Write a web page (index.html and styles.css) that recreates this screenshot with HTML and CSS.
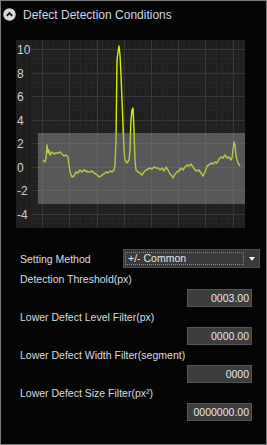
FILE: index.html
```html
<!DOCTYPE html>
<html lang="en">
<head>
    <meta charset="UTF-8">
    <meta name="viewport" content="width=device-width, initial-scale=1.0">
    <title>Defect Detection Conditions</title>
    <link rel="stylesheet" href="styles.css">
</head>
<body>
    <div class="panel">
        <div class="panel-header">
            <span class="toggle">
                <svg width="13" height="13" viewBox="0 0 13 13">
                    <circle cx="6.5" cy="6.5" r="6.2" fill="#d9d9d9"/>
                    <path d="M3.8 7.8 L6.5 5.1 L9.2 7.8" fill="none" stroke="#111" stroke-width="1.8"/>
                </svg>
            </span>
            <span class="title">Defect Detection Conditions</span>
        </div>

        <div class="chart">
            <svg width="229" height="188" viewBox="16 40 229 188">
                <rect x="16" y="40" width="229" height="188" fill="#1f1f1f"/>
                <g id="minorGrid" stroke="#262626" stroke-width="1"></g>
                <g stroke="#363636" stroke-width="1">
                    <line x1="42.5" y1="40" x2="42.5" y2="228"/>
                    <line x1="69.5" y1="40" x2="69.5" y2="228"/>
                    <line x1="97.5" y1="40" x2="97.5" y2="228"/>
                    <line x1="124.5" y1="40" x2="124.5" y2="228"/>
                    <line x1="151.5" y1="40" x2="151.5" y2="228"/>
                    <line x1="178.5" y1="40" x2="178.5" y2="228"/>
                    <line x1="205.5" y1="40" x2="205.5" y2="228"/>
                    <line x1="233.5" y1="40" x2="233.5" y2="228"/>
                    <line x1="32" y1="49.5" x2="245" y2="49.5"/>
                    <line x1="32" y1="73.5" x2="245" y2="73.5"/>
                    <line x1="32" y1="96.5" x2="245" y2="96.5"/>
                    <line x1="32" y1="120.5" x2="245" y2="120.5"/>
                    <line x1="32" y1="143.5" x2="245" y2="143.5"/>
                    <line x1="32" y1="167.5" x2="245" y2="167.5"/>
                    <line x1="32" y1="190.5" x2="245" y2="190.5"/>
                    <line x1="32" y1="214.5" x2="245" y2="214.5"/>
                </g>
                <g class="axis-label">
                    <text x="17" y="53.5">10</text>
                    <text x="17" y="77.5">8</text>
                    <text x="17" y="101">6</text>
                    <text x="17" y="124.5">4</text>
                    <text x="17" y="148">2</text>
                    <text x="17" y="171.5">0</text>
                    <text x="17" y="195">-2</text>
                    <text x="17" y="218.5">-4</text>
                </g>
                <polyline fill="none" stroke="#d6f000" stroke-width="1.4" stroke-linejoin="round"
                    points="43,160 45,162 46,158 47,145 48,153 49,150 50,155 52,152 54,154 56,153 58,153 60,152 62,154 64,156 66,155 68,157 69,165 70,172 72,177 74,176 76,172 78,173 80,170 82,172 84,170 86,171 88,172 90,172 92,171 94,173 96,174 98,176 100,177 102,175 104,174 106,172 108,173 110,171 112,172 114,170 115,165 116,140 117,60 118,52 119,46 120,55 121,75 122,100 123,125 124,150 125,160 127,163 129,160 130,150 131,120 132,110 133,108 134,130 135,160 136,170 138,172 140,173 142,175 144,172 146,170 148,169 150,168 152,169 154,167 156,168 158,168 160,170 162,168 164,171 166,167 168,170 170,174 172,176 173,178 175,174 177,172 179,171 181,168 183,170 185,167 187,165 189,166 191,164 193,167 195,170 197,171 199,170 201,173 203,176 205,172 207,166 209,165 211,163 213,164 215,162 217,163 219,159 221,157 223,158 225,155 227,158 229,157 231,160 232,158 234,142 235,145 236,155 237,160 238,163 240,166"/>
                <rect x="38" y="133" width="207" height="71" fill="rgba(150, 150, 150, 0.47)"/>
            </svg>
        </div>

        <div class="form">
            <div class="row">
                <label class="row-label">Setting Method</label>
                <div class="select">
                    <span class="select-value">+/- Common</span>
                    <span class="select-arrow"></span>
                </div>
            </div>

            <div class="field">
                <label>Detection Threshold(px)</label>
                <input type="text" value="0003.00">
            </div>

            <div class="field">
                <label>Lower Defect Level Filter(px)</label>
                <input type="text" value="0000.00">
            </div>

            <div class="field">
                <label>Lower Defect Width Filter(segment)</label>
                <input type="text" value="0000">
            </div>

            <div class="field">
                <label>Lower Defect Size Filter(px²)</label>
                <input type="text" value="0000000.00">
            </div>
        </div>
    </div>

    <script>
        // fine background grid of the chart
        let minor = document.getElementById("minorGrid");
        let ns = "http://www.w3.org/2000/svg";
        for (let x = 42.5 - 27.2; x < 245; x += 5.44) {
            let l = document.createElementNS(ns, "line");
            l.setAttribute("x1", x); l.setAttribute("x2", x);
            l.setAttribute("y1", 40); l.setAttribute("y2", 228);
            minor.appendChild(l);
        }
        for (let y = 49.5; y < 228; y += 4.7) {
            let l = document.createElementNS(ns, "line");
            l.setAttribute("x1", 32); l.setAttribute("x2", 245);
            l.setAttribute("y1", y); l.setAttribute("y2", y);
            minor.appendChild(l);
        }
    </script>
</body>
</html>
```

FILE: styles.css
```css
* { margin: 0; padding: 0; box-sizing: border-box; font-family: 'Liberation Sans', Arial, sans-serif; }
body { background: #050505; color: #d8dce4; }

.panel {
    width: 267px;
    height: 445px;
    border: 1px solid #7c7c7c;
    background: #050505;
}

.panel-header {
    display: flex;
    align-items: center;
    height: 27px;
    padding-left: 2px;
    gap: 7px;
}

.toggle { display: flex; }

.title {
    font-size: 12px;
    color: #cdd6e6;
    padding-top: 1px;
}

.chart {
    display: flex;
    margin: 12px 0 0 15px;
    height: 188px;
}

.axis-label text {
    font-size: 12px;
    fill: #d0d0d0;
    font-family: 'Liberation Sans', Arial, sans-serif;
}

.form {
    padding: 21px 6px 0 19px;
    font-size: 10.5px;
}

.row {
    display: flex;
    align-items: center;
    height: 19px;
    margin-bottom: 4px;
}

.row-label { width: 103px; }

.select {
    flex: 1;
    height: 19px;
    display: flex;
    align-items: center;
    background: #3a3a3a;
    border: 1px solid #4c4c4c;
    padding: 0 4px 0 1px;
}

.select-value {
    flex: 1;
    height: 13px;
    line-height: 11px;
    border: 1px dotted #8a8a8a;
    padding-left: 2px;
    color: #e6e6e6;
}

.select-arrow {
    width: 0;
    height: 0;
    margin-left: 5px;
    border-left: 3px solid transparent;
    border-right: 3px solid transparent;
    border-top: 4px solid #f0f0f0;
}

.field {
    display: flex;
    flex-direction: column;
    margin-bottom: 3px;
}

.field label {
    line-height: 15px;
    padding-bottom: 2px;
}

input {
    align-self: flex-end;
    width: 65px;
    height: 18px;
    margin-right: 8px;
    background: #3d3d3d;
    border: 1px solid #555;
    color: #e8e8e8;
    font-size: 10.5px;
    text-align: right;
    padding-right: 2px;
    outline: none;
}
```
